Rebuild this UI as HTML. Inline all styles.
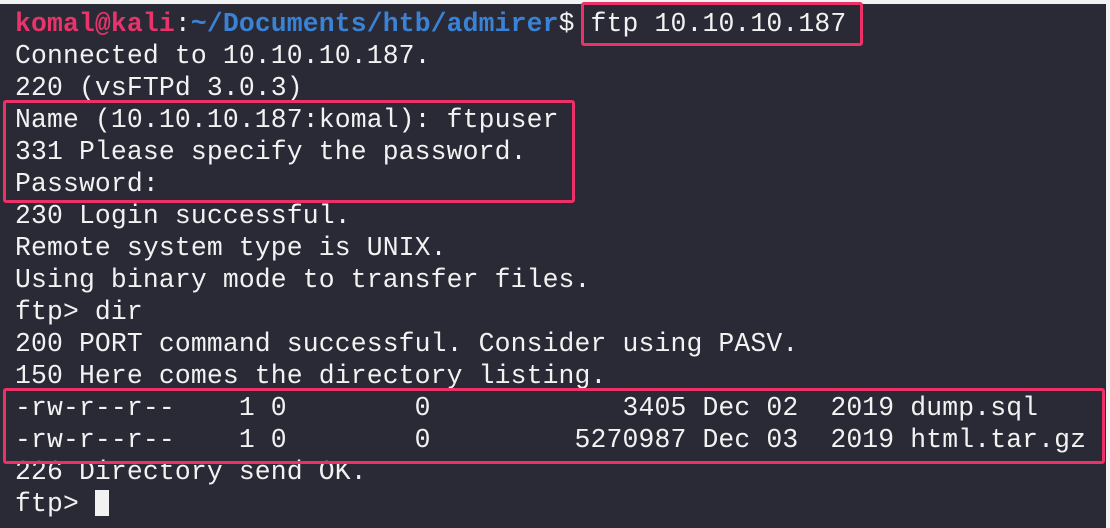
<!DOCTYPE html>
<html><head><style>
html,body{margin:0;padding:0;}
body{width:1110px;height:528px;background:#f1f2f2;position:relative;overflow:hidden;}
.term{position:absolute;left:0;top:4px;width:1106px;height:524px;background:#292a35;}
pre{position:absolute;left:15px;top:8px;margin:0;font-family:"Liberation Mono",monospace;font-size:26.4px;line-height:32px;color:#f2f2f2;white-space:pre;letter-spacing:0.15px;}
.r{color:#e8336b;font-weight:bold}.b{color:#3a82d6;font-weight:bold}
.box{position:absolute;border:3px solid #ee3068;border-radius:3px;}
.cur{display:inline-block;width:14px;height:26px;background:#f2f2f2;vertical-align:-5px;}
</style></head><body>
<div class="term"></div>
<pre><span class="r">komal@kali</span>:<span class="b">~/Documents/htb/admirer</span>$ ftp 10.10.10.187
Connected to 10.10.10.187.
220 (vsFTPd 3.0.3)
Name (10.10.10.187:komal): ftpuser
331 Please specify the password.
Password:
230 Login successful.
Remote system type is UNIX.
Using binary mode to transfer files.
ftp&gt; dir
200 PORT command successful. Consider using PASV.
150 Here comes the directory listing.
-rw-r--r--    1 0        0            3405 Dec 02  2019 dump.sql
-rw-r--r--    1 0        0         5270987 Dec 03  2019 html.tar.gz
226 Directory send OK.
ftp&gt; <span class="cur"></span></pre>
<div class="box" style="left:581px;top:2px;width:276px;height:38px"></div>
<div class="box" style="left:3px;top:100px;width:566px;height:97px"></div>
<div class="box" style="left:3px;top:388px;width:1096px;height:70px"></div>
</body></html>
